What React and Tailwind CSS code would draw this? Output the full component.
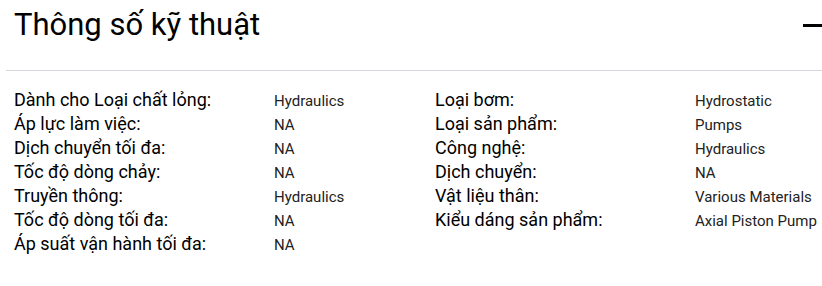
const left = [
    ['Dành cho Loại chất lỏng:', 'Hydraulics'],
    ['Áp lực làm việc:', 'NA'],
    ['Dịch chuyển tối đa:', 'NA'],
    ['Tốc độ dòng chảy:', 'NA'],
    ['Truyền thông:', 'Hydraulics'],
    ['Tốc độ dòng tối đa:', 'NA'],
    ['Áp suất vận hành tối đa:', 'NA'],
];

const right = [
    ['Loại bơm:', 'Hydrostatic'],
    ['Loại sản phẩm:', 'Pumps'],
    ['Công nghệ:', 'Hydraulics'],
    ['Dịch chuyển:', 'NA'],
    ['Vật liệu thân:', 'Various Materials'],
    ['Kiểu dáng sản phẩm:', 'Axial Piston Pump'],
];

function SpecList({ rows }) {
    return (
        <dl className="flex flex-col">
            {rows.map(([label, value]) => (
                <div key={label} className="flex items-baseline h-6">
                    <dt className="w-[260px] flex-none text-[18px] leading-6 text-black">{label}</dt>
                    <dd className="text-[15px] leading-6 text-[#222] whitespace-nowrap">{value}</dd>
                </div>
            ))}
        </dl>
    );
}

export default function App() {
    return (
        <div className="w-[822px] h-[286px] bg-white overflow-hidden font-['Roboto',sans-serif]">
            <div className="flex items-center justify-between pl-[14px] pt-[7px]">
                <h2 className="text-[31px] leading-9 text-black">Thông số kỹ thuật</h2>
                <span className="block w-[19px] h-[3px] bg-black mt-[1px]" aria-label="Collapse" />
            </div>
            <div className="ml-[6px] mt-[27px] h-px bg-[#d3d7dc]" />
            <div className="grid grid-cols-[421px_1fr] pl-[14px] mt-[17px]">
                <SpecList rows={left} />
                <SpecList rows={right} />
            </div>
        </div>
    );
}
